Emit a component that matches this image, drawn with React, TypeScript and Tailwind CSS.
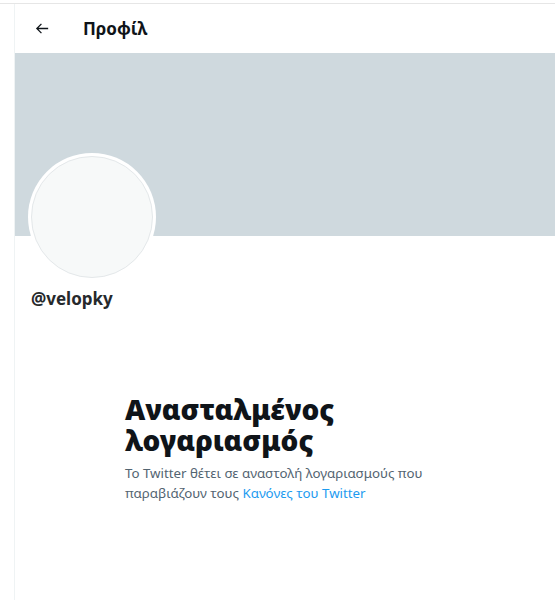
import React from 'react';

const App: React.FC = () => {
  return (
    <div className="h-[600px] w-[555px] overflow-hidden bg-white font-['Noto_Sans',sans-serif]">
      <div className="mt-[3px] border-t border-[#e6e6e6] pl-[14px]">
        <div className="h-[597px] border-l border-[#eff3f4]">
          {/* header */}
          <div className="flex h-[49px] items-center">
            <svg viewBox="0 0 24 24" className="ml-[19px] h-[17px] w-[17px] text-[#0f1419]" fill="none" stroke="currentColor" strokeWidth="1.8">
              <path d="M20 12H4.5M10.5 5.5 4 12l6.5 6.5" />
            </svg>
            <h2 className="ml-[32px] text-[17px] font-bold text-[#0f1419]">Προφίλ</h2>
          </div>

          {/* banner */}
          <div className="h-[183px] bg-[#cfd9de]" />

          {/* avatar + handle */}
          <div className="px-[13px]">
            <div className="-mt-[83px] h-[128px] w-[128px] rounded-full bg-white p-[3px]">
              <div className="h-full w-full rounded-full border border-[#e4e8ea] bg-[#f7f9f9]" />
            </div>
            <div className="mt-[5px] pl-[3px] text-[17px] font-bold text-[#26292c]">@velopky</div>
          </div>

          {/* suspended */}
          <div className="mt-[81px] flex flex-col pl-[110px] pr-8">
            <h1 className="text-[28px] font-black leading-[32px] text-[#0f1419]">Ανασταλμένος</h1>
            <h1 className="text-[28px] font-black leading-[31px] text-[#0f1419]">λογαριασμός</h1>
            <p className="mt-[7px] text-[13.3px] leading-[20px] text-[#536471]">
              Το Twitter θέτει σε αναστολή λογαριασμούς που
              <br />
              παραβιάζουν τους <span className="text-[#1d9bf0]">Κανόνες του Twitter</span>
            </p>
          </div>
        </div>
      </div>
    </div>
  );
};

export default App;
